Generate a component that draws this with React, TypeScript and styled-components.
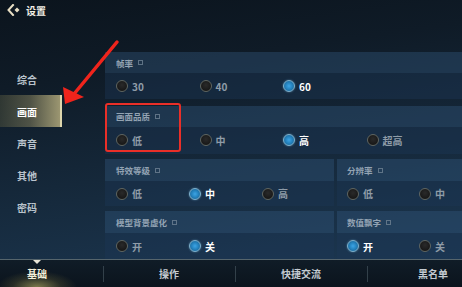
import React from "react";
import styled, { createGlobalStyle } from "styled-components";

const Global = createGlobalStyle`
  html, body { margin: 0; padding: 0; background: #0c1620; }
  * { box-sizing: border-box; }
`;

const FONT = `"Noto Sans CJK SC", "Noto Sans", "Liberation Sans", sans-serif`;

const Screen = styled.div`
  position: relative;
  width: 462px;
  height: 287px;
  overflow: hidden;
  font-family: ${FONT};
  background: linear-gradient(172deg, #0b141d 0%, #0f1b27 25%, #162a3d 60%, #1d3a56 100%);
  display: flex;
  flex-direction: column;
`;

const Header = styled.div`
  height: 20px;
  flex: none;
  display: flex;
  align-items: center;
  padding-left: 7px;
  gap: 5px;
  color: #f2efe6;
  font-size: 10px;
  font-weight: 700;
`;

const Middle = styled.div`
  flex: 1;
  display: flex;
  min-height: 0;
`;

const Sidebar = styled.div`
  width: 62px;
  flex: none;
  padding-top: 43px;
  display: flex;
  flex-direction: column;
`;

const SideItem = styled.div<{ $active?: boolean }>`
  height: 32px;
  display: flex;
  align-items: center;
  padding-left: 17px;
  white-space: nowrap;
  font-size: 10px;
  font-weight: 700;
  color: ${(p) => (p.$active ? "#ffffff" : "#b9c3cc")};
  background: ${(p) =>
    p.$active
      ? "linear-gradient(90deg, rgba(95,95,65,0.4) 0%, rgba(130,125,90,0.55) 50%, rgba(190,180,130,0.8) 100%)"
      : "transparent"};
  border-right: ${(p) => (p.$active ? "2px solid #ddd5ac" : "2px solid transparent")};
`;

const Content = styled.div`
  flex: 1;
  min-width: 0;
  margin-left: 43px;
  padding-top: 32px;
  display: flex;
  flex-direction: column;
  gap: 5px;
  position: relative;
`;

const Row = styled.div`
  display: flex;
  gap: 3px;
`;

const Panel = styled.div<{ $w?: number }>`
  position: relative;
  ${(p) => (p.$w ? `width: ${p.$w}px; flex: none;` : "flex: 1; min-width: 0;")}
  display: flex;
  flex-direction: column;
`;

const PanelHead = styled.div<{ $h: number; $pad: number }>`
  height: ${(p) => p.$h}px;
  display: flex;
  align-items: center;
  padding-left: ${(p) => p.$pad}px;
  gap: 5px;
  background: rgba(50, 88, 124, 0.4);
  color: #93a3b3;
  font-size: 8.5px;
  font-weight: 700;
  white-space: nowrap;
`;

const InfoMark = styled.span`
  width: 5px;
  height: 5px;
  border: 1px solid #6f8294;
  opacity: 0.8;
`;

const Options = styled.div<{ $h: number; $pad: number }>`
  height: ${(p) => p.$h}px;
  display: flex;
  align-items: center;
  padding-left: ${(p) => p.$pad}px;
  background: rgba(28, 56, 86, 0.42);
  overflow: hidden;
`;

const Option = styled.div<{ $w: number; $on?: boolean }>`
  width: ${(p) => p.$w}px;
  flex: none;
  display: flex;
  align-items: center;
  gap: 4px;
  font-size: 10px;
  font-weight: 700;
  white-space: nowrap;
  color: ${(p) => (p.$on ? "#ffffff" : "#8f9ca8")};
`;

const Radio = styled.span<{ $on?: boolean }>`
  width: 12px;
  height: 12px;
  border-radius: 50%;
  flex: none;
  border: 1.5px solid ${(p) => (p.$on ? "#7fb3cf" : "#5f6560")};
  background: ${(p) =>
    p.$on
      ? "radial-gradient(circle at 50% 50%, #3da4e4 0%, #2584c0 45%, #1a5a86 100%)"
      : "radial-gradient(circle at 50% 40%, #2a2a2a 0%, #111 100%)"};
  box-shadow: ${(p) => (p.$on ? "0 0 2px rgba(120,190,230,0.6)" : "none")};
`;

const Highlight = styled.div`
  position: absolute;
  left: 0;
  top: -3px;
  width: 76px;
  height: 49px;
  border: 2px solid #ea2f28;
  border-radius: 3px;
  pointer-events: none;
`;

const Footer = styled.div`
  height: 28px;
  flex: none;
  display: flex;
  margin-left: -29px;
  border-top: 1px solid #56656c;
  background: linear-gradient(180deg, #101c27 0%, #0b141d 100%);
  position: relative;
`;

const Tab = styled.div<{ $active?: boolean; $first?: boolean }>`
  width: 132px;
  flex: none;
  position: relative;
  display: flex;
  align-items: center;
  justify-content: center;
  font-size: 10px;
  font-weight: 700;
  color: ${(p) => (p.$active ? "#f5f0dc" : "#c3cad0")};
  background: ${(p) =>
    p.$active
      ? "radial-gradient(ellipse 40px 16px at 50% 100%, rgba(235,220,120,0.5) 0%, rgba(200,180,80,0.15) 60%, transparent 100%)"
      : "transparent"};
  &::before {
    content: "";
    display: ${(p) => (p.$first ? "none" : "block")};
    position: absolute;
    left: 0;
    top: 6px;
    bottom: 5px;
    width: 1px;
    background: rgba(120, 140, 150, 0.35);
  }
`;

const Caret = styled.span`
  position: absolute;
  top: 0;
  left: 50%;
  transform: translateX(-50%);
  width: 0;
  height: 0;
  border-left: 4px solid transparent;
  border-right: 4px solid transparent;
  border-top: 4px solid #e8e4d6;
`;

const ArrowLayer = styled.svg`
  position: absolute;
  left: 0;
  top: 0;
  pointer-events: none;
`;

const BackIcon = () => (
  <svg width="14" height="12" viewBox="0 0 14 12">
    <path d="M6 1 L1.5 6 L6 11" fill="none" stroke="#e9dfc4" strokeWidth="2" strokeLinecap="square" />
    <path d="M10 3.5 L12.5 6 L10 8.5 L7.5 6 Z" fill="#e9dfc4" />
  </svg>
);

type Opt = { label: string; on?: boolean };

const Section = ({
  title,
  opts,
  w,
  colW,
  headH,
  optH,
  pad = 11,
  children,
}: {
  title: string;
  opts: Opt[];
  w?: number;
  colW: number;
  headH: number;
  optH: number;
  pad?: number;
  children?: React.ReactNode;
}) => (
  <Panel $w={w}>
    <PanelHead $h={headH} $pad={pad}>
      {title}
      <InfoMark />
    </PanelHead>
    <Options $h={optH} $pad={pad}>
      {opts.map((o) => (
        <Option key={o.label} $w={colW} $on={o.on}>
          <Radio $on={o.on} />
          {o.label}
        </Option>
      ))}
    </Options>
    {children}
  </Panel>
);

export default function App() {
  return (
    <>
      <Global />
      <Screen>
        <Header>
          <BackIcon />
          设置
        </Header>
        <Middle>
          <Sidebar>
            <SideItem>综合</SideItem>
            <SideItem $active>画面</SideItem>
            <SideItem>声音</SideItem>
            <SideItem>其他</SideItem>
            <SideItem>密码</SideItem>
          </Sidebar>
          <Content>
            <Section
              title="帧率"
              colW={83.5}
              headH={21}
              optH={26}
              opts={[{ label: "30" }, { label: "40" }, { label: "60", on: true }]}
            />
            <Section
              title="画面品质"
              colW={83.5}
              headH={21}
              optH={27}
              opts={[{ label: "低" }, { label: "中" }, { label: "高", on: true }, { label: "超高" }]}
            >
              <Highlight />
            </Section>
            <Row>
              <Section
                title="特效等级"
                w={229}
                colW={73}
                headH={22}
                optH={25}
                opts={[{ label: "低" }, { label: "中", on: true }, { label: "高" }]}
              />
              <Section
                title="分辨率"
                colW={72}
                headH={22}
                optH={25}
                pad={10}
                opts={[{ label: "低" }, { label: "中" }]}
              />
            </Row>
            <Row>
              <Section
                title="模型背景虚化"
                w={229}
                colW={73}
                headH={22}
                optH={26}
                opts={[{ label: "开" }, { label: "关", on: true }]}
              />
              <Section
                title="数值飘字"
                colW={72}
                headH={22}
                optH={26}
                pad={10}
                opts={[{ label: "开", on: true }, { label: "关" }]}
              />
            </Row>
          </Content>
        </Middle>
        <Footer>
          <Tab $active $first>
            <Caret />
            基础
          </Tab>
          <Tab>操作</Tab>
          <Tab>快捷交流</Tab>
          <Tab>黑名单</Tab>
        </Footer>
        <ArrowLayer width="462" height="287" viewBox="0 0 462 287">
          <path d="M117 42 L74 94" stroke="#f0241c" strokeWidth="3.5" strokeLinecap="round" />
          <polygon points="65,104 63,87 84,97" fill="#f0241c" />
        </ArrowLayer>
      </Screen>
    </>
  );
}
